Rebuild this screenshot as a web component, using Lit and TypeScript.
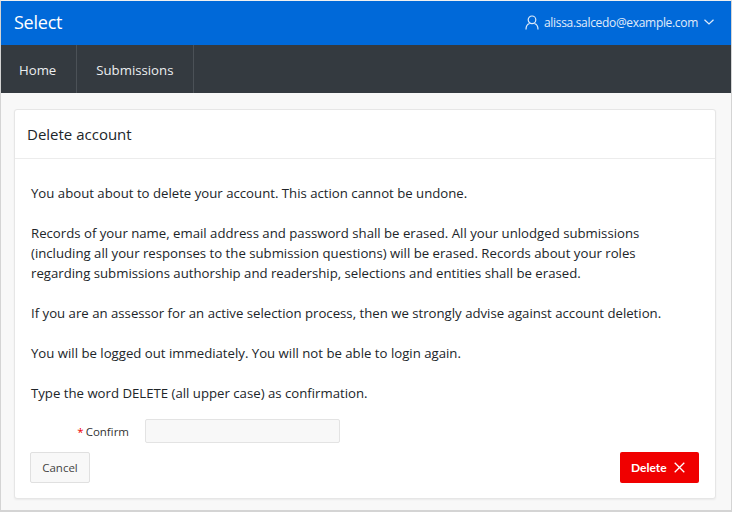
import { LitElement, html, css } from 'lit';
import { customElement } from 'lit/decorators.js';

@customElement('app-root')
export class AppRoot extends LitElement {
  static styles = css`
    :host {
      display: block;
      box-sizing: border-box;
      width: 732px;
      height: 512px;
      overflow: hidden;
      border: 1px solid #d4d4d4;
      border-top-color: #f0f0f0;
      border-bottom-width: 2px;
      background: #f8f8f8;
      color: #212529;
      font-family: 'Open Sans', 'Noto Sans', sans-serif;
      font-size: 14px;
    }
    .topbar {
      display: flex;
      align-items: center;
      justify-content: space-between;
      height: 44px;
      padding: 0 17px 0 13px;
      background: #0069d9;
      color: #fff;
    }
    .brand {
      font-size: 18px;
      letter-spacing: -0.25px;
      padding-bottom: 3px;
    }
    .user {
      display: flex;
      align-items: center;
      gap: 5px;
      font-size: 12px;
      letter-spacing: -0.32px;
      color: #e0ecfa;
      padding-bottom: 2px;
    }
    .user svg {
      display: block;
    }
    .nav {
      display: flex;
      height: 48px;
      background: #343a40;
      color: #eceef0;
    }
    .nav a {
      display: flex;
      align-items: center;
      padding: 2px 20px 0 18px;
      border-right: 1px solid #4b5157;
      font-size: 13.2px;
    }
    .nav a + a {
      padding: 2px 20px 0 19px;
    }
    .page {
      padding: 16px 15px 0 13px;
    }
    .card {
      background: #fff;
      border: 1px solid #e6e6e6;
      border-radius: 3px;
      box-shadow: 0 1px 2px rgba(0, 0, 0, 0.06);
      height: 390px;
      box-sizing: border-box;
    }
    .card-title {
      height: 48px;
      display: flex;
      align-items: center;
      padding: 0 12px;
      border-bottom: 1px solid #ececec;
      font-size: 15px;
    }
    .card-body {
      padding: 24px 16px 0 16px;
      font-size: 13.2px;
      line-height: 20px;
    }
    p {
      margin: 0 0 20px;
    }
    .confirm {
      display: flex;
      align-items: center;
      height: 24px;
      margin-top: -4px;
    }
    label {
      width: 98px;
      padding-top: 2px;
      text-align: right;
      font-size: 11.5px;
      color: #333;
    }
    label b {
      color: #f00000;
      font-weight: 400;
      margin-right: 2px;
    }
    input {
      box-sizing: border-box;
      width: 195px;
      height: 24px;
      margin-left: 16px;
      background: #f8f8f8;
      border: 1px solid #e3e3e3;
      border-radius: 2px;
      padding: 0 6px;
    }
    .actions {
      display: flex;
      justify-content: space-between;
      align-items: flex-start;
      margin-top: 9px;
    }
    button {
      font: inherit;
      height: 31px;
      border-radius: 2px;
      display: flex;
      align-items: center;
    }
    .cancel {
      width: 60px;
      margin-left: -1px;
      justify-content: center;
      background: #f8f8f8;
      border: 1px solid #e0e0e0;
      color: #444;
      font-size: 11.5px;
    }
    .delete {
      width: 79px;
      padding: 0 0 0 11px;
      gap: 7px;
      background: #f00000;
      border: none;
      color: #fff;
      font-family: Lato, sans-serif;
      font-weight: 700;
      font-size: 12px;
    }
  `;

  render() {
    return html`
      <header class="topbar">
        <span class="brand">Select</span>
        <span class="user">
          <svg width="14" height="15" viewBox="0 0 14 15" fill="none" stroke="#e0ecfa" stroke-width="1.2">
            <circle cx="7" cy="4.800" r="3.800"></circle>
            <path d="M1 14.500c0-3.200 1.800-5.500 3.600-6M13 14.500c0-3.200-1.800-5.500-3.600-6"></path>
          </svg>
          alissa.salcedo@example.com
          <svg style="margin-left:1px" width="10" height="6" viewBox="0 0 10 6" fill="none" stroke="#e0ecfa" stroke-width="1.2">
            <path d="M.5.7 5 5l4.500-4.300"></path>
          </svg>
        </span>
      </header>
      <nav class="nav">
        <a>Home</a>
        <a>Submissions</a>
      </nav>
      <main class="page">
        <section class="card">
          <div class="card-title">Delete account</div>
          <div class="card-body">
            <p>You about about to delete your account. This action cannot be undone.</p>
            <p>
              Records of your name, email address and password shall be erased. All your unlodged submissions<br />
              (including all your responses to the submission questions) will be erased. Records about your roles<br />
              regarding submissions authorship and readership, selections and entities shall be erased.
            </p>
            <p>If you are an assessor for an active selection process, then we strongly advise against account deletion.</p>
            <p>You will be logged out immediately. You will not be able to login again.</p>
            <p>Type the word DELETE (all upper case) as confirmation.</p>
            <div class="confirm">
              <label><b>*</b>Confirm</label>
              <input type="text" />
            </div>
            <div class="actions">
              <button class="cancel">Cancel</button>
              <button class="delete">
                Delete
                <svg width="11" height="11" viewBox="0 0 11 11" stroke="#fff" stroke-width="1.3" fill="none">
                  <path d="M.7.7l9.600 9.600M10.300.7.7 10.300"></path>
                </svg>
              </button>
            </div>
          </div>
        </section>
      </main>
    `;
  }
}
